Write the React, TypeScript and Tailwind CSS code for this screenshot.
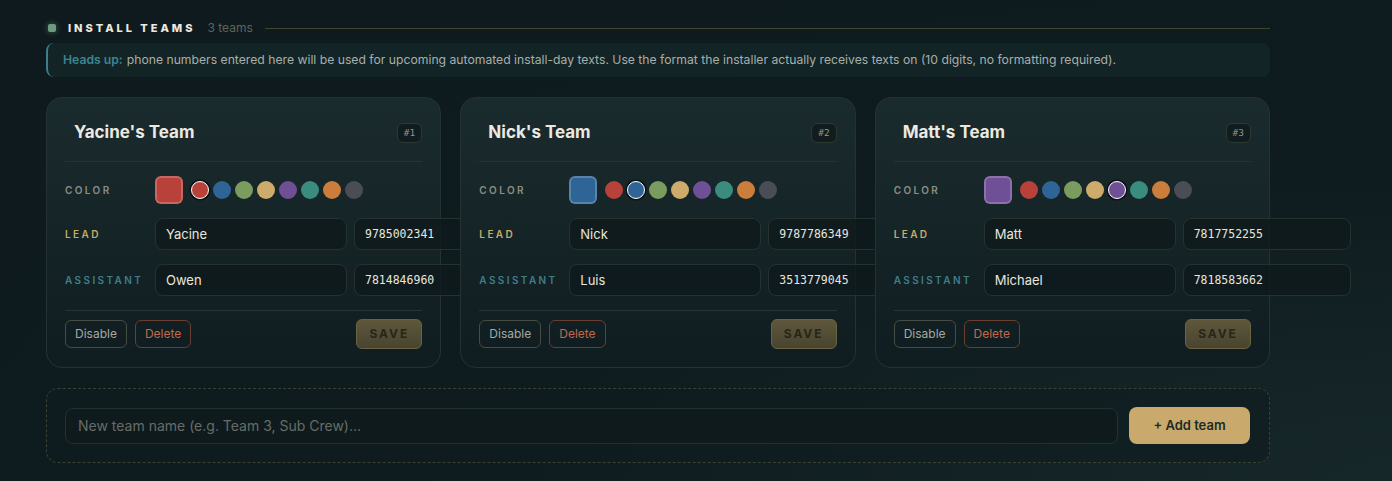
import { useState } from 'react';

const palette = ['#b8423a', '#2f6596', '#7b9c5f', '#cdac6b', '#6f4f96', '#3a8c7e', '#cb7d3b', '#4b4d56'];

const initialTeams = [
  { id: 1, name: "Yacine's Team", color: 0, lead: 'Yacine', leadPhone: '9785002341', assistant: 'Owen', assistantPhone: '7814846960' },
  { id: 2, name: "Nick's Team", color: 1, lead: 'Nick', leadPhone: '9787786349', assistant: 'Luis', assistantPhone: '3513779045' },
  { id: 3, name: "Matt's Team", color: 4, lead: 'Matt', leadPhone: '7817752255', assistant: 'Michael', assistantPhone: '7818583662' },
];

type Team = (typeof initialTeams)[number];

function TeamCard({ team, onChange }: { team: Team; onChange: (t: Team) => void }) {
  const nameInput = 'h-8 w-[192px] shrink-0 rounded-lg border border-[#243330] bg-[#0e191c]/80 px-2.5 text-[13px] text-[#e8e6df] outline-none';
  const phoneInput = 'h-8 w-[168px] shrink-0 rounded-lg border border-[#243330] bg-[#0e191c]/80 px-2.5 font-["DejaVu_Sans_Mono",monospace] text-[11.5px] text-[#e8e6df] outline-none';

  return (
    <div className="rounded-2xl border border-[#24332f] bg-gradient-to-b from-[#1a2b2e] to-[#101d20] p-[18px]">
      <div className="flex h-[46px] items-start justify-between border-b border-[#26352f] pb-3">
        <div className="flex h-[34px] items-center pl-[9px] text-[17px] font-bold text-[#ece9e1]">{team.name}</div>
        <div className="mt-[7px] flex h-5 items-center rounded-md border border-[#2a3834] bg-[#111c1f] px-1.5 font-['DejaVu_Sans_Mono',monospace] text-[9.5px] text-[#8d948f]">
          #{team.id}
        </div>
      </div>

      <div className="mt-[14px] flex items-center">
        <div className="w-[90px] shrink-0 text-[10px] font-semibold tracking-[0.24em] text-[#8b8e86]">COLOR</div>
        <div
          className="h-7 w-7 rounded-md border-2 border-white/20"
          style={{ backgroundColor: palette[team.color] }}
        />
        <div className="ml-2 flex items-center gap-1">
          {palette.map((c, i) => (
            <button
              key={c}
              onClick={() => onChange({ ...team, color: i })}
              className={
                i === team.color
                  ? 'h-[18px] w-[18px] rounded-full border border-white shadow-[0_0_0_1.5px_#0b1214]'
                  : 'h-[18px] w-[18px] rounded-full'
              }
              style={{ backgroundColor: c }}
            />
          ))}
        </div>
      </div>

      <div className="mt-[14px] flex items-center">
        <div className="w-[90px] shrink-0 text-[10px] font-semibold tracking-[0.24em] text-[#c9aa66]">LEAD</div>
        <input className={nameInput} value={team.lead} onChange={e => onChange({ ...team, lead: e.target.value })} />
        <input className={`ml-[7px] ${phoneInput}`} value={team.leadPhone} onChange={e => onChange({ ...team, leadPhone: e.target.value })} />
      </div>

      <div className="mt-[14px] flex items-center">
        <div className="w-[90px] shrink-0 text-[10px] font-semibold tracking-[0.24em] text-[#3e7f8a]">ASSISTANT</div>
        <input className={nameInput} value={team.assistant} onChange={e => onChange({ ...team, assistant: e.target.value })} />
        <input className={`ml-[7px] ${phoneInput}`} value={team.assistantPhone} onChange={e => onChange({ ...team, assistantPhone: e.target.value })} />
      </div>

      <div className="mt-[14px] flex items-center justify-between border-t border-[#26352f] pt-2">
        <div className="flex gap-2">
          <button className="h-7 rounded-md border border-[#464c44] px-[9px] text-[12px] text-[#a3a8a0]">Disable</button>
          <button className="h-7 rounded-md border border-[#6a3d2f] px-[9px] text-[12px] text-[#bf6a4f]">Delete</button>
        </div>
        <button className="h-[30px] w-[66px] rounded-md border border-[#6b6244] bg-gradient-to-b from-[#5e573b] to-[#48442f] text-[12px] font-bold tracking-[0.16em] text-[#262619]">
          SAVE
        </button>
      </div>
    </div>
  );
}

export default function App() {
  const [teams, setTeams] = useState(initialTeams);
  const [newName, setNewName] = useState('');

  return (
    <div className="min-h-screen overflow-hidden bg-[#0e1b1e] bg-[radial-gradient(ellipse_at_100%_100%,#16272a_0%,#0f1c1f_45%,#0e1a1d_100%)] font-['Inter',sans-serif]">
      <div className="ml-[46px] w-[1224px] pt-5">
        <div className="flex h-4 items-center">
          <div className="ml-[2px] h-2 w-2 rounded-[2px] bg-[#6e9a82] shadow-[0_0_6px_rgba(110,154,130,0.6)]" />
          <div className="ml-3 text-[11px] font-extrabold tracking-[0.27em] text-[#ece9e1]">INSTALL TEAMS</div>
          <div className="ml-3 text-[12px] text-[#5d655f]">3 teams</div>
          <div className="ml-3 h-px flex-1 bg-[#45432c]" />
        </div>

        <div className="mt-[7px] flex h-[34px] items-center rounded-lg border-l-2 border-[#3c7e8a] bg-[#132427] pl-[15px] text-[12.2px] text-[#a8afa9]">
          <span className="mr-1 font-semibold text-[#3f8491]">Heads up:</span>
          phone numbers entered here will be used for upcoming automated install-day texts. Use the format the installer actually receives texts on (10 digits, no formatting required).
        </div>

        <div className="mt-5 grid grid-cols-3 gap-[19px]">
          {teams.map(t => (
            <TeamCard key={t.id} team={t} onChange={nt => setTeams(prev => prev.map(p => (p.id === nt.id ? nt : p)))} />
          ))}
        </div>

        <div className="mt-5 flex items-center gap-[11px] rounded-xl border border-dashed border-[#3c4030] bg-[#0f1c1f]/60 py-[18px] pl-[18px] pr-[19px]">
          <input
            className="h-9 flex-1 rounded-lg border border-[#233130] bg-[#0f1a1d] px-3 text-[14px] text-[#e8e6df] placeholder-[#666d68] outline-none"
            placeholder="New team name (e.g. Team 3, Sub Crew)..."
            value={newName}
            onChange={e => setNewName(e.target.value)}
          />
          <button className="h-[37px] w-[121px] rounded-lg bg-[#c9aa6c] text-[13px] font-semibold text-[#1c2a2a]">+ Add team</button>
        </div>
      </div>
    </div>
  );
}
